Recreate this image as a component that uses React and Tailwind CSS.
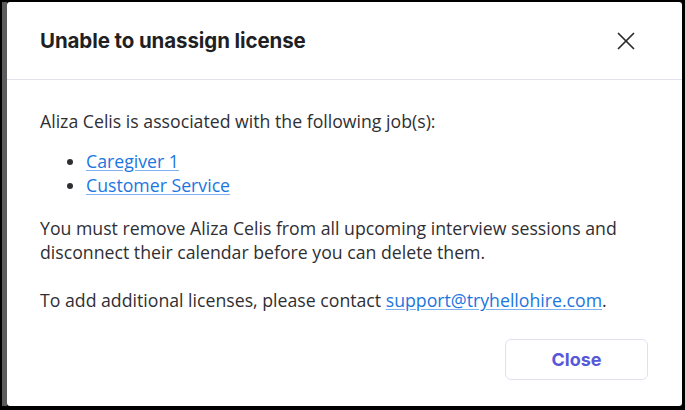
import { X } from 'lucide-react';

const jobs = ['Caregiver 1', 'Customer Service'];

const App = () => {
    return (
        <div className="w-[685px] h-[410px] bg-black pt-[2px] pr-[3px] pb-[4px] pl-[2px] flex overflow-hidden">
            <div className="w-[5px] bg-[#5c5c5c]" />
            <div className="flex-1 flex flex-col bg-white rounded-[3px] overflow-hidden">
                {/* Header */}
                <div className="h-[78px] flex items-center justify-between pl-[33px] pr-[41px] border-b border-[#e2e2ef]">
                    <h2 className="text-[20.5px] font-bold text-[#1f1f24] font-['Inter',sans-serif] tracking-[-0.1px] mt-[1px]">
                        Unable to unassign license
                    </h2>
                    <button className="text-[#2b2b2b]">
                        <X size={30} strokeWidth={1.4} />
                    </button>
                </div>

                {/* Body */}
                <div className="flex-1 flex flex-col pl-[33px] pr-[28px] pt-[29px] text-[17.7px] leading-[24px] text-[#2f2f33] font-['Open_Sans',sans-serif]">
                    <p>Aliza Celis is associated with the following job(s):</p>
                    <ul className="list-disc pl-[46px] mt-[16px] mb-[18px]">
                        {jobs.map((job) => (
                            <li key={job}>
                                <a href="#" className="text-[#1b76e0] underline decoration-[#7fb2ee] underline-offset-2">{job}</a>
                            </li>
                        ))}
                    </ul>
                    <p className="mt-[1px]">
                        You must remove Aliza Celis from all upcoming interview sessions and disconnect their calendar before you can delete them.
                    </p>
                    <p className="mt-[24px]">
                        To add additional licenses, please contact{' '}
                        <a href="#" className="text-[#1b76e0] underline decoration-[#7fb2ee] underline-offset-2">support@tryhellohire.com</a>.
                    </p>
                    <div className="flex justify-end mt-[27px] pr-[6px]">
                        <button className="w-[143px] h-[41px] rounded-[6px] border border-[#e2e0f0] text-[#5558d9] text-[18px] font-bold font-['Inter',sans-serif]">
                            Close
                        </button>
                    </div>
                </div>
            </div>
        </div>
    );
};

export default App;
